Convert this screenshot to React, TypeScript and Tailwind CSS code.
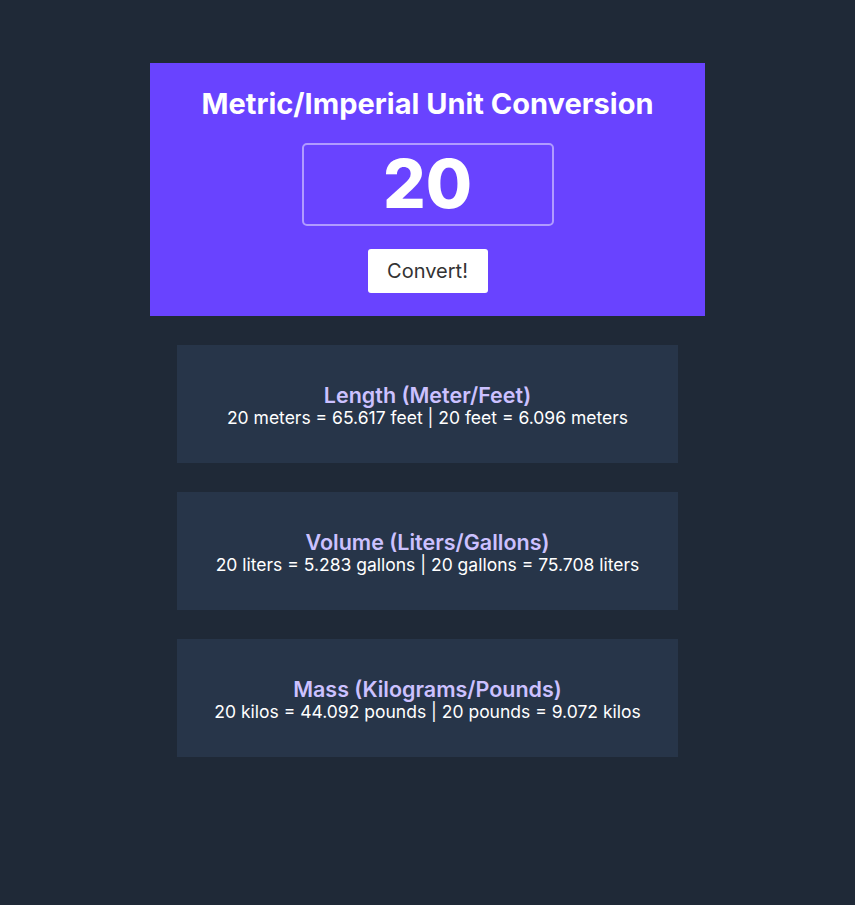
import React, { useState } from "react";

const results = [
  {
    title: "Length (Meter/Feet)",
    text: "20 meters = 65.617 feet | 20 feet = 6.096 meters",
  },
  {
    title: "Volume (Liters/Gallons)",
    text: "20 liters = 5.283 gallons | 20 gallons = 75.708 liters",
  },
  {
    title: "Mass (Kilograms/Pounds)",
    text: "20 kilos = 44.092 pounds | 20 pounds = 9.072 kilos",
  },
];

export default function App() {
  const [value, setValue] = useState("20");

  return (
    <div className="min-h-[905px] bg-[#1f2937] pt-[63px] font-['Inter',sans-serif]">
      {/* Header / input */}
      <div className="mx-auto flex w-[555px] flex-col items-center bg-[#6943ff] pt-[23px] pb-[23px]">
        <h1 className="text-[29px] font-bold leading-[36px] text-white">
          Metric/Imperial Unit Conversion
        </h1>
        <input
          value={value}
          onChange={(e) => setValue(e.target.value)}
          className="mt-[21px] h-[83px] w-[252px] rounded-[5px] border-2 border-[#b09bff] bg-transparent text-center text-[67px] font-extrabold text-white outline-none"
        />
        <button className="mt-[23px] h-[44px] w-[120px] rounded-[3px] bg-white text-[20px] text-[#333]">
          Convert!
        </button>
      </div>

      {/* Results */}
      <div className="mt-[29px] flex flex-col items-center gap-[29px]">
        {results.map((r) => (
          <div
            key={r.title}
            className="flex h-[118px] w-[501px] flex-col items-center justify-center bg-[#273549] pt-[4px]"
          >
            <h2 className="text-[21.5px] font-semibold leading-[24px] text-[#ccc1ff]">
              {r.title}
            </h2>
            <p className="text-[17.5px] leading-[22px] text-white">{r.text}</p>
          </div>
        ))}
      </div>
    </div>
  );
}
